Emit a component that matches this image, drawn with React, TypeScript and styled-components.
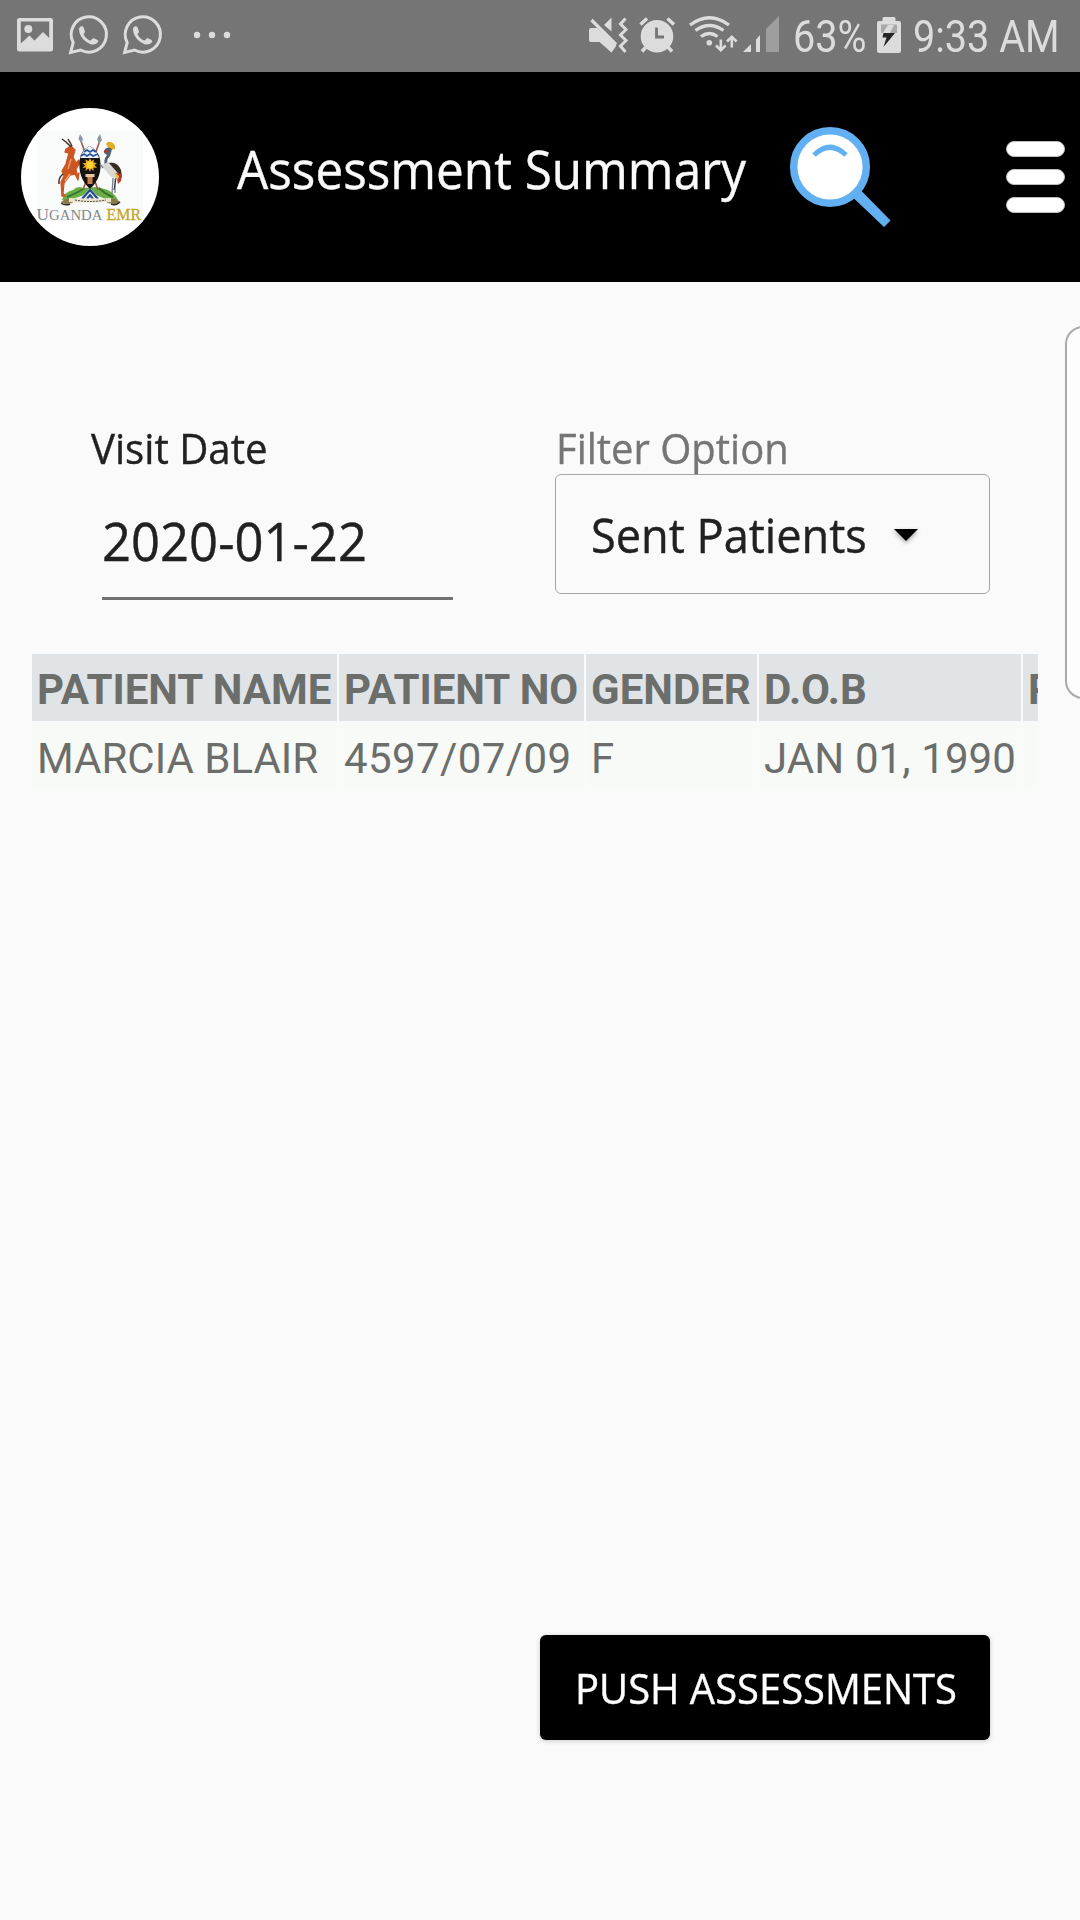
import React from "react";
import styled, { createGlobalStyle } from "styled-components";

const GlobalStyle = createGlobalStyle`
  * { box-sizing: border-box; }
  body { margin: 0; background: #fafafa; }
  button { font: inherit; border: 0; padding: 0; background: none; }
`;

const Screen = styled.div`
  position: relative;
  display: flex;
  flex-direction: column;
  width: 1080px;
  height: 1920px;
  overflow: hidden;
  background: #fafafa;
  font-family: "Open Sans", "Noto Sans", sans-serif;
`;

const Label = styled.span<{ $size: number; $scale: number; $color?: string }>`
  display: block;
  width: max-content;
  margin: 0;
  white-space: nowrap;
  font-size: ${(p) => p.$size}px;
  font-weight: 400;
  line-height: 60px;
  color: ${(p) => p.$color ?? "#212121"};
  -webkit-text-stroke: 0.4px currentColor;
  transform: scaleX(${(p) => p.$scale});
  transform-origin: 0 50%;
`;

const StatusBar = styled.div`
  display: flex;
  justify-content: space-between;
  height: 72px;
  background: #757575;
`;

const StatusText = styled.span<{ $width: number }>`
  display: block;
  width: ${(p) => p.$width}px;
  padding-top: 7px;
  white-space: nowrap;
  font-family: Roboto, sans-serif;
  font-size: 45px;
  line-height: 60px;
  color: #dcdcdc;
  transform: scaleX(0.88);
  transform-origin: 0 50%;
`;

const StatusGroup = styled.div`
  display: flex;
`;

const Header = styled.header`
  display: flex;
  height: 210px;
  padding-left: 21px;
  background: #000;
`;

const Logo = styled.div`
  width: 138px;
  height: 138px;
  margin-top: 36px;
  border-radius: 50%;
  overflow: hidden;
  background: #fff;
`;

const TitleBox = styled.div`
  width: 548px;
  margin-left: 78px;
  padding-top: 67px;
`;

const SearchButton = styled.button`
  display: block;
  width: 110px;
  height: 110px;
  margin-top: 48px;
`;

const MenuButton = styled.button`
  display: flex;
  flex-direction: column;
  gap: 12px;
  width: 59px;
  margin-top: 69px;
  margin-left: 111px;
`;

const MenuBar = styled.span`
  height: 16px;
  border-radius: 8px;
  background: #fff;
  border: 1px solid #bdbdbd;
`;

const Filters = styled.section`
  display: flex;
  height: 372px;
  padding: 136px 90px 0;
`;

const DateField = styled.div`
  width: 465px;
`;

const DateInput = styled.div`
  width: 351px;
  height: 122px;
  margin-left: 12px;
  padding: 33px 0 0 0;
  border-bottom: 3px solid #6f726f;
`;

const FilterField = styled.div`
  width: 435px;
`;

const FieldLabel = styled.div`
  padding-left: 1px;
`;

const SelectBox = styled.div`
  display: grid;
  grid-template-columns: 302px 26px;
  align-items: start;
  height: 120px;
  margin-top: -4px;
  padding: 30px 0 0 35px;
  border: 1px solid #a5a5a5;
  border-radius: 6px;
`;

const Caret = styled.svg`
  margin-top: 23px;
  filter: drop-shadow(0 2px 2px rgba(0, 0, 0, 0.35));
`;

const TableScroll = styled.div`
  width: 1006px;
  margin-left: 32px;
  overflow: hidden;
`;

const Table = styled.div`
  display: grid;
  grid-template-columns: 305px 245px 171px 262px 300px;
  grid-template-rows: 67px 67px;
  gap: 2px;
  width: 1291px;
`;

const Cell = styled.div<{ $head?: boolean; $spacing?: number }>`
  padding-left: 5px;
  white-space: nowrap;
  font-family: Roboto, sans-serif;
  font-size: 42px;
  line-height: 71px;
  letter-spacing: ${(p) => p.$spacing ?? 0}px;
  font-weight: ${(p) => (p.$head ? 700 : 400)};
  color: #6c6e6b;
  background: ${(p) => (p.$head ? "#e0e4e7" : "#f8faf7")};
`;

const Actions = styled.div`
  display: flex;
  justify-content: flex-end;
  margin-top: 845px;
  padding-right: 90px;
`;

const PushButton = styled.button`
  width: 450px;
  height: 105px;
  padding: 0 0 0 34.5px;
  text-align: left;
  border-radius: 6px;
  background: #000;
  box-shadow: 0 1px 5px rgba(0, 0, 0, 0.2);
`;

const EdgePanel = styled.div`
  position: absolute;
  left: 1065px;
  top: 326px;
  width: 40px;
  height: 373px;
  border: 2px solid #aaa;
  border-radius: 18px;
  background: #fdfdfd;
`;

const C = "#dcdcdc";

const WhatsApp = ({ x }: { x: number }) => (
  <g transform={`translate(${x} 0)`}>
    <path d="M4.2 42.600A17.600 17.600 0 1 1 11.500 50L1.600 52.500z" fill="none" stroke={C} strokeWidth="3" />
    <path d="M10 29.500C10 26.500 12 26 13.300 26.200C15 26.500 15.300 30 16 31.500C16 33 14.500 33.500 14.500 34.500C16 37.500 18.500 39.500 21 40.500C22.500 40.500 23 38.200 24.500 38.200C26.500 38.800 29.500 40 29.300 41.500C28 44.500 24 45 21 43.900C15 41.500 10.500 36 10 29.500Z" fill={C} />
  </g>
);

const LeftStatusIcons = () => (
  <svg width="240" height="72" viewBox="0 0 240 72">
    <path fillRule="evenodd" fill={C} d="M19.500 18H50.500A2.500 2.500 0 0 1 53 20.500V49A2.500 2.500 0 0 1 50.500 51.500H19.500A2.500 2.500 0 0 1 17 49V20.500A2.500 2.500 0 0 1 19.500 18ZM20.800 21.500V43.500L29.500 35.500L34.500 40.500L43 32L49.200 38V21.500Z" />
    <circle cx="28.300" cy="29" r="4" fill={C} />
    <WhatsApp x={69} />
    <WhatsApp x={123} />
    <circle cx="197" cy="35" r="3.200" fill={C} />
    <circle cx="212" cy="35" r="3.200" fill={C} />
    <circle cx="227" cy="35" r="3.200" fill={C} />
  </svg>
);

const RightStatusIcons = () => (
  <svg width="223" height="72" viewBox="570 0 223 72">
    <g fill={C}>
      <path d="M591 28H597L616.500 45.500L611.500 52.500L599.500 42H591A2 2 0 0 1 589 40V30A2 2 0 0 1 591 28Z" />
      <path d="M604 25L611.500 17.500V31.500Z" />
      <path d="M611.500 40V52.500L608 49Z" />
      <circle cx="657" cy="36.300" r="16.300" />
      <circle cx="709.300" cy="42.800" r="2.800" />
    </g>
    <path d="M591.500 20L616 44.500" stroke={C} strokeWidth="3.200" />
    <path d="M625.500 18.500L620.500 24L626 29.500L620.500 35L626 40.500L620.500 46L625.500 52" fill="none" stroke={C} strokeWidth="3" />
    <path d="M656.500 27.500V37H664" fill="none" stroke="#757575" strokeWidth="2.800" />
    <path d="M640.500 24.500L647 18.500M667.500 18.500L674 24.500M642 51.500L647 46M667 46L672 51.500" stroke={C} strokeWidth="3.500" />
    <g fill="none" stroke={C} strokeWidth="3.300">
      <path d="M690 25Q709.500 10.500 729 25" />
      <path d="M695.500 30.500Q709.500 20.500 723.500 30.500" />
      <path d="M701 36.500Q709.500 30.500 717.500 36.500" />
      <path d="M720.800 39.500V49.500M716 45.500L720.800 50.200L725.600 45.500M731.800 47.500V37.500M727 41.500L731.800 36.800L736.600 41.500" strokeWidth="2.600" />
    </g>
    <path d="M743 52L751 44V52ZM756 39.500L760 35V52H756Z" fill={C} />
    <path d="M766 29L779 16V52H766Z" fill="#9e9e9e" />
  </svg>
);

const Battery = () => (
  <svg width="51" height="72" viewBox="862 0 51 72">
    <path d="M884 17H894A1.500 1.500 0 0 1 895.500 18.500V21H899A2 2 0 0 1 901 23V51A2 2 0 0 1 899 53H879A2 2 0 0 1 877 51V23A2 2 0 0 1 879 21H882.500V18.500A1.500 1.500 0 0 1 884 17Z" fill={C} />
    <path d="M881 24.500H897V33H881Z" fill="#a9a9a9" />
    <path d="M888 25H894L890 33H883Z" fill={C} />
    <path d="M883.500 33H895L883.500 47L886.500 37.500H882.500Z" fill="#252525" />
  </svg>
);

const Crest = () => (
  <svg width="138" height="138" viewBox="21 108 138 138">
    <rect x="37" y="130.500" width="106" height="91" fill="#f9fbfa" />
    {/* green mound and ribbon */}
    <path d="M62 200Q64 192 73 190Q78 185 83 188L97 187L108 190Q115 194 118 200L111 201L90 193L70 200Z" fill="#6cae46" />
    <path d="M67 197Q77 193 83 189M113 197Q105 194 99 188" stroke="#37762e" strokeWidth="2" fill="none" />
    <path d="M61 202Q66 197 71 199L73 203L65 204Z" fill="#8a7847" />
    <path d="M120 202Q115 197 109 199L107 203L115 204Z" fill="#8a7847" />
    <path d="M79 200L90 188L101 200Z" fill="#f7f9fb" />
    <path d="M82 199L90 190L98 199M87 199L90 195L93 199" fill="none" stroke="#234c91" strokeWidth="2.200" />
    <path d="M69 200Q90 201 111 200" fill="none" stroke="#ebe4d0" strokeWidth="4" />
    <path d="M75 200Q90 203 106 200" fill="none" stroke="#51483c" strokeWidth="1" strokeDasharray="2 1" />
    <path d="M61 203Q65 206 70 204M111 204Q116 206 120 202" stroke="#2e2a20" strokeWidth="1.500" fill="none" />
    {/* crossed spears */}
    <path d="M81 141L98 190M100 140L83 190" stroke="#9a5848" strokeWidth="1.600" />
    <path d="M80 134L78.500 139L81.500 143.500L83 139ZM100 134L97 139L99 144L102 140Z" fill="#8b98a2" />
    {/* antelope */}
    <path d="M66 149L71 146L75 150L73 157L76 163L79 160L80 163L76 169L77 175L79 173L78 180L75 174L70 175L64 183L63 193L65 196H62L61 182L64 176L62 171L66 164L69 153L65 152Z" fill="#cc5524" stroke="#cc5524" strokeWidth="1.300" strokeLinejoin="round" />
    <path d="M71 147L66 142L62 139M72 146L68 139M63 174Q58 178 59 184" stroke="#443028" fill="none" strokeWidth="1.500" />
    <path d="M70 174L65 181M71 159L68 169" stroke="#f0a05e" strokeWidth="1.500" />
    {/* shield */}
    <path d="M89.500 146Q98 150 100 159Q103 177 90 189Q77 177 80 159Q81 150 89.500 146Z" fill="#15130f" />
    <path d="M89.500 146Q97 150 99 158H80.500Q83 149 89.500 146Z" fill="#eef3f7" />
    <path d="M84 152L87 150L90 152L93 150L96 152M81 156L84 154L87 156L90 154L93 156L98 154" fill="none" stroke="#2456a2" strokeWidth="1.800" />
    <path d="M90 158L91.300 161L94 159.500L93.500 162.500L97 163L94.500 165L97 168L93.500 167.500L93.500 171L91 168.500L90 172L88.500 168.500L85.500 171L86 167.500L82.500 168L85 165.500L82.500 163L86 163L85.500 159.500L88.500 161Z" fill="#eda923" />
    <circle cx="90" cy="165" r="3.500" fill="#ffd534" />
    <path d="M85.500 174H94.500L92.500 178V184H87.500V178Z" fill="#c68249" />
    <path d="M85.500 174H94.500V177H85.500Z" fill="#e8c7a1" />
    {/* crested crane */}
    <path d="M106 144Q107 141 111 142Q116 144 115 149L110 150Z" fill="#e0af27" />
    <path d="M105 149Q108 146 112 149L110 156Q105 161 109 166L106 168Q102 161 107 155L104 153Z" fill="#53616d" />
    <path d="M104 151L108 152" stroke="#bd3230" strokeWidth="2" />
    <path d="M104 164Q111 159 119 166Q122 171 119 179Q110 178 106 171L101 166Z" fill="#d9d8d2" />
    <path d="M109 163Q117 161 121 170L122 178L116 171Z" fill="#3a2a25" />
    <path d="M116 173L122 174L121 181L118 184Z" fill="#b83627" />
    <path d="M114 172L119 176L118 180Z" fill="#efc23a" />
    <path d="M113 178L112 194M115 179L115 193M103 168L100 164" stroke="#788087" strokeWidth="1.300" />
    <path d="M116 178L114 190" stroke="#302d2a" strokeWidth="1" />
    <g fontFamily="Liberation Serif, serif">
      <text x="36.500" y="219.800" fontSize="17" fill="#858789" textLength="12.500" lengthAdjust="spacingAndGlyphs">U</text>
      <text x="49" y="219.800" fontSize="14" fill="#858789" textLength="53.500" lengthAdjust="spacingAndGlyphs">GANDA</text>
      <text x="106.500" y="219.800" fontSize="17" fill="#c2a529" stroke="#c2a529" strokeWidth="0.300" textLength="34.500" lengthAdjust="spacingAndGlyphs">EMR</text>
    </g>
  </svg>
);

const SearchIcon = () => (
  <svg width="110" height="110" viewBox="785 120 110 110">
    <path d="M856 196L861.500 191L890.500 220.500L884 227L853.500 198Z" fill="#62b0f2" />
    <circle cx="830" cy="167" r="36.300" fill="#fff" stroke="#62b0f2" strokeWidth="7.500" />
    <path d="M814 155Q830 139.500 846 155" fill="none" stroke="#62b0f2" strokeWidth="5" />
  </svg>
);

const columns = ["PATIENT NAME", "PATIENT NO", "GENDER", "D.O.B", "PHONE"];
const patient = [
  { value: "MARCIA BLAIR" },
  { value: "4597/07/09", spacing: 0.4 },
  { value: "F" },
  { value: "JAN 01, 1990", spacing: 0.1 },
  { value: "" },
];

export default function App() {
  return (
    <Screen>
      <GlobalStyle />
      <StatusBar>
        <LeftStatusIcons />
        <StatusGroup>
          <RightStatusIcons />
          <StatusText $width={69}>63%</StatusText>
          <Battery />
          <StatusText $width={167}>9:33 AM</StatusText>
        </StatusGroup>
      </StatusBar>
      <Header>
        <Logo><Crest /></Logo>
        <TitleBox>
          <Label as="h1" $size={53} $scale={0.933} $color="#fafafa">Assessment Summary</Label>
        </TitleBox>
        <SearchButton aria-label="Search"><SearchIcon /></SearchButton>
        <MenuButton aria-label="Menu"><MenuBar /><MenuBar /><MenuBar /></MenuButton>
      </Header>
      <Filters>
        <DateField>
          <FieldLabel><Label $size={42} $scale={0.957}>Visit Date</Label></FieldLabel>
          <DateInput><Label $size={53} $scale={0.958}>2020-01-22</Label></DateInput>
        </DateField>
        <FilterField>
          <FieldLabel><Label $size={42} $scale={0.952} $color="#757575">Filter Option</Label></FieldLabel>
          <SelectBox>
            <Label $size={48} $scale={0.94}>Sent Patients</Label>
            <Caret width="26" height="14" viewBox="0 0 26 14"><path d="M1 1H25L13 13Z" fill="#000" /></Caret>
          </SelectBox>
        </FilterField>
      </Filters>
      <TableScroll>
        <Table>
          {columns.map((name) => <Cell key={name} $head>{name}</Cell>)}
          {patient.map((cell, i) => <Cell key={i} $spacing={cell.spacing}>{cell.value}</Cell>)}
        </Table>
      </TableScroll>
      <Actions>
        <PushButton><Label $size={42} $scale={0.951} $color="#fff">PUSH ASSESSMENTS</Label></PushButton>
      </Actions>
      <EdgePanel />
    </Screen>
  );
}
